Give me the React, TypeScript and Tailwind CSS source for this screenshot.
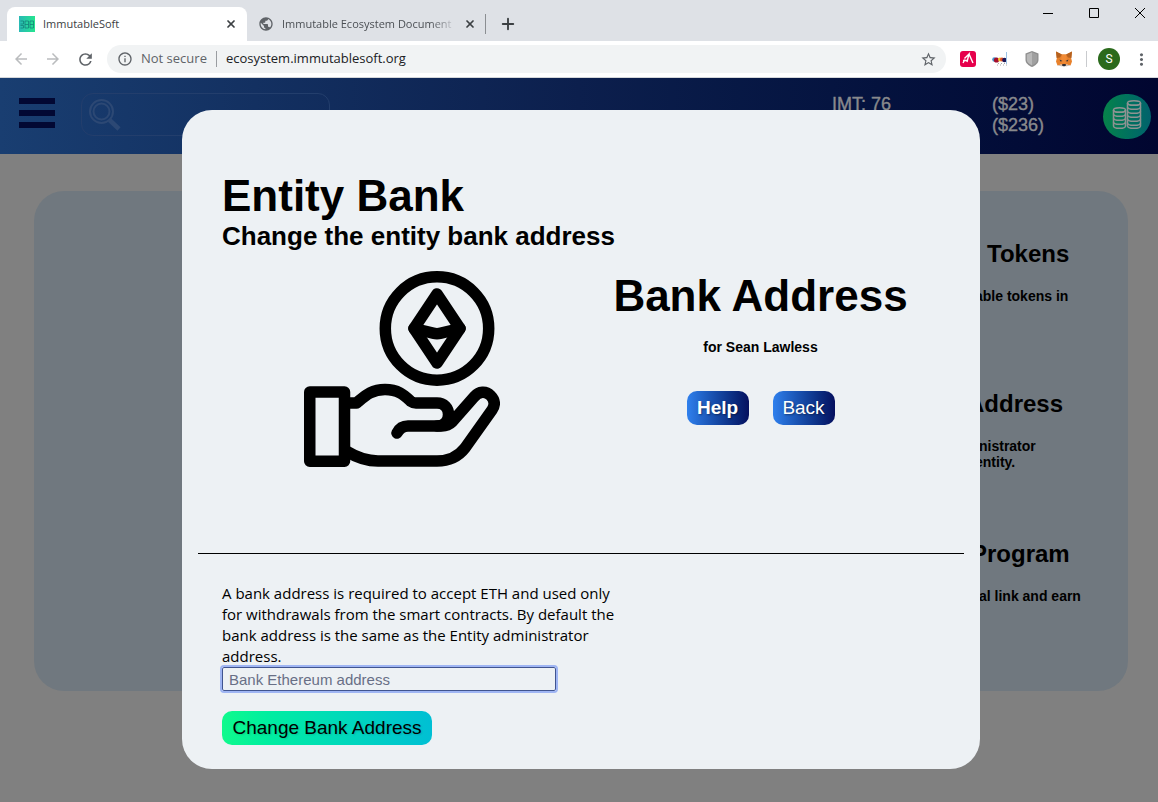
import type { ReactNode } from "react";
import { Plus, X } from "lucide-react";
import { MdArrowBack, MdArrowForward, MdInfoOutline, MdMoreVert, MdPublic, MdRefresh, MdStarBorder } from "react-icons/md";

const ui = "font-['Open_Sans','Noto_Sans',sans-serif]";
const arial = "font-['Liberation_Sans',Arial,sans-serif]";

function TabStrip() {
  return (
    <div className="flex h-[41px] items-end bg-[#dee1e6] pl-[7px]">
      <div className="flex h-[34px] w-60 shrink-0 items-center rounded-t-lg bg-white pr-2.5 pl-3">
        <svg viewBox="0 0 16 16" className="size-4 shrink-0" aria-hidden="true">
          <defs>
            <linearGradient id="fav" x1="0" x2="1">
              <stop offset="0" stopColor="#29b9b5" />
              <stop offset="1" stopColor="#25e58f" />
            </linearGradient>
          </defs>
          <rect width="16" height="16" fill="url(#fav)" />
          <path d="M1.5 5h3v3h-3M1.5 9.500h3v2.500h-3M6 5h3.500v7H6V5zm0 3.500h3.500M11 5h3.500v7H11V5zm0 3.500h3.500" fill="none" stroke="#137f78" strokeWidth="1" opacity=".75" />
        </svg>
        <span className="ml-2 flex-1 text-[11px] text-[#3c4043]">ImmutableSoft</span>
        <button type="button" aria-label="Close tab">
          <X size={12} strokeWidth={3.500} className="text-[#3c4043]" />
        </button>
      </div>
      <div className="flex h-[34px] w-[239px] shrink-0 items-center pl-[11px]">
        <MdPublic size={16} className="shrink-0 text-[#5f6368]" />
        <span className="ml-2 w-[175px] text-[11px] whitespace-nowrap text-[#4b4f54] [mask-image:linear-gradient(to_right,black_85%,transparent)]">
          Immutable Ecosystem Document
        </span>
        <button type="button" aria-label="Close tab" className="ml-[7px]">
          <X size={12} strokeWidth={3.500} className="text-[#3c4043]" />
        </button>
        <span className="ml-[9px] h-5 w-px shrink-0 bg-[#8b8e92]" />
      </div>
      <button type="button" aria-label="New tab" className="ml-[13px] flex h-[34px] items-center">
        <Plus size={18} strokeWidth={2.500} className="text-[#3c4043]" />
      </button>
      <div className="ml-auto flex h-full items-start gap-9 pt-2 pr-[13px] text-black">
        <button type="button" aria-label="Minimize">
          <svg viewBox="0 0 10 10" className="size-2.5"><path d="M0 5.500h10" stroke="currentColor" /></svg>
        </button>
        <button type="button" aria-label="Maximize">
          <svg viewBox="0 0 10 10" className="size-2.5"><path d="M.5.5h9v9h-9z" fill="none" stroke="currentColor" /></svg>
        </button>
        <button type="button" aria-label="Close">
          <svg viewBox="0 0 10 10" className="size-2.5"><path d="M0 0l10 10M10 0L0 10" stroke="currentColor" /></svg>
        </button>
      </div>
    </div>
  );
}

function Extensions() {
  return (
    <div className="ml-3.5 flex items-center gap-4">
      <svg viewBox="0 0 16 16" className="size-4">
        <rect width="16" height="16" rx="3" fill="#e6004c" />
        <path d="M3 12l2-3.500M3 9.500h4.500M4.500 7.500L9 3l-2 8M9 3l4 9" fill="none" stroke="#fff" strokeWidth="1.400" />
      </svg>
      <svg viewBox="0 0 16 16" className="size-4">
        <circle cx="2.500" cy="8.500" r="2.300" fill="#4a91c9" />
        <circle cx="4.500" cy="9" r="2.600" fill="#a30f2e" />
        <circle cx="8" cy="8.500" r="2" fill="#f4c531" />
        <circle cx="10" cy="8.500" r="2" fill="#e24f2c" />
        <circle cx="12.500" cy="9" r="2.300" fill="#1c1755" />
        <path d="M14.500 1v12" stroke="#9cc3e6" />
        <path d="M5 14h10M6 12.500h8" stroke="#aaa" strokeDasharray="1 2" />
      </svg>
      <svg viewBox="0 0 16 16" className="size-4">
        <path d="M8 0l6.500 2.500V9c0 3-3 5.500-6.500 7-3.500-1.500-6.500-4-6.500-7V2.500z" fill="#8f8f8f" />
        <path d="M8 1.300v13.200c-3-1.400-5.200-3.300-5.200-5.700V3.400z" fill="#b9b9b9" />
        <path d="M8 1.300v13.200c3-1.400 5.200-3.300 5.200-5.700V3.400z" fill="#a0a0a0" />
      </svg>
      <svg viewBox="0 0 16 16" className="size-4">
        <path d="M0 .5l6 3h4l6-3-1 6 1 4-1.500 4-4-1-1.500 1.500H7L5.500 13.500l-4 1L0 10.500l1-4z" fill="#e8812b" />
        <path d="M0 .5l6 3-2 3-3.500.5zM16 .5l-6 3 2 3 3.500.5z" fill="#b5611f" />
        <path d="M6 3.500h4l1 6-1 3H6l-1-3z" fill="#f08a35" />
        <path d="M3.500 8.500l3 1.500-2 .5zM12.500 8.500l-3 1.500 2 .5zM6.500 13h3l.5 1.500-1 .8H7l-1-.8z" fill="#2b2f3a" />
        <path d="M1.500 14.500l4-1 1 2zM14.500 14.500l-4-1-1 2z" fill="#cdbfb4" />
      </svg>
    </div>
  );
}

function Toolbar() {
  return (
    <div className="flex h-[37px] items-center border-b border-[#d5d7da] bg-white pr-[7px] pl-3 text-[#5f6368]">
      <button type="button" aria-label="Back" className="text-[#babcbe]"><MdArrowBack size={18} /></button>
      <button type="button" aria-label="Forward" className="ml-3.5 text-[#babcbe]"><MdArrowForward size={18} /></button>
      <button type="button" aria-label="Reload" className="ml-3.5"><MdRefresh size={19} /></button>
      <div className="ml-3 flex h-7 flex-1 items-center rounded-full bg-[#f1f3f4] pr-[9px] pl-2.5">
        <MdInfoOutline size={16} />
        <span className="ml-2 text-[13px]">Not secure</span>
        <span className="mr-[9px] ml-[9px] h-4 w-px bg-[#9a9da1]" />
        <input
          aria-label="Address"
          defaultValue="ecosystem.immutablesoft.org"
          className="min-w-0 flex-1 bg-transparent text-[13px] text-[#202124] outline-none"
        />
        <MdStarBorder size={17} />
      </div>
      <Extensions />
      <span className="ml-3.5 h-4 w-px bg-[#c9cbce]" />
      <button type="button" className="ml-[11px] flex size-[22px] items-center justify-center rounded-full bg-[#2b6a1c] font-['Roboto',sans-serif] text-xs text-white">
        S
      </button>
      <button type="button" aria-label="Menu" className="ml-3"><MdMoreVert size={19} /></button>
    </div>
  );
}

function Coins() {
  const left = [16, 20, 24, 28, 32];
  const right = [9, 13, 17, 21, 25, 29, 32];
  return (
    <svg viewBox="0 0 48 45" className="h-[45px] w-12" fill="none" stroke="#8e9392" strokeWidth="1.500">
      <ellipse cx="16.500" cy="16" rx="6" ry="2.300" />
      <path d="M10.500 16v16M22.500 16v16" />
      {left.map((y) => <path key={y} d={`M10.500 ${y}c0 3.100 12 3.100 12 0`} />)}
      <ellipse cx="31" cy="9" rx="6.500" ry="2.300" />
      <path d="M24.500 9V32M37.500 9V32" />
      {right.map((y) => <path key={y} d={`M24.500 ${y}c0 3.100 13 3.100 13 0`} />)}
    </svg>
  );
}

function SiteHeader() {
  return (
    <header className="flex h-[76px] bg-linear-to-r from-[#193e71] via-[#0c1f4d] to-[#010630] pr-[7px] pl-[19px]">
      <button type="button" aria-label="Open menu" className="mt-5 flex h-[30px] w-9 flex-col justify-between">
        <span className="h-1.5 w-full bg-[#020833]" />
        <span className="h-1.5 w-full bg-[#020833]" />
        <span className="h-1.5 w-full bg-[#020833]" />
      </button>
      <div className="mt-[15px] ml-[26px] flex h-[43px] w-[249px] items-center rounded-xl border border-[#233e6c] px-1.5">
        <svg viewBox="0 0 34 34" className="size-[34px] shrink-0" fill="none" stroke="#2c4874">
          <circle cx="13.500" cy="13.500" r="11.500" strokeWidth="2" />
          <circle cx="13.500" cy="13.500" r="8" strokeWidth="2" />
          <path d="M21.500 22l9.500 9" strokeWidth="4.500" />
        </svg>
        <input aria-label="Search" className="min-w-0 flex-1 bg-transparent outline-none" />
      </div>
      <div className="ml-auto flex pt-4 text-lg leading-[21px] text-[#88898c] [-webkit-text-stroke:0.4px_#88898c]">
        <p className="w-40">IMT: 76</p>
        <p className="w-[111px]">($23)<br />($236)</p>
      </div>
      <button type="button" aria-label="Tokens" className="mt-4 h-[45px] w-12 shrink-0 rounded-full bg-linear-to-r from-[#078249] to-[#02626c]">
        <Coins />
      </button>
    </header>
  );
}

function Summary({ title, inset, children }: { title: string; inset: string; children: ReactNode }) {
  return (
    <section className="h-[150px]">
      <h2 className={`text-2xl leading-8 font-bold ${inset}`}>{title}</h2>
      <div className="mt-[18px] text-sm leading-4 font-bold">{children}</div>
    </section>
  );
}

function Backdrop() {
  return (
    <div className="mt-[37px] mr-[30px] ml-[34px] flex h-[500px] justify-end rounded-[30px] bg-[#70787f]">
      <div className="w-[161px] pt-[47px] whitespace-nowrap text-black">
        <Summary title="Tokens" inset="pl-5"><p className="pl-2">able tokens in</p></Summary>
        <Summary title="Address" inset="pl-0"><p className="pl-3">nistrator</p><p className="pl-2">entity.</p></Summary>
        <Summary title="Program" inset="pl-1"><p className="pl-3">al link and earn</p></Summary>
      </div>
    </div>
  );
}

function HandWithCoin() {
  return (
    <svg viewBox="0 0 196 196" className="size-[196px]" fill="none" stroke="black" strokeWidth="11.500" strokeLinecap="round" strokeLinejoin="round" aria-hidden="true">
      <circle cx="133" cy="57.500" r="51.700" />
      <path d="M133 23l23 34.500-23 34.500-23-34.500z" />
      <path d="M110 57.500l19 4.700q4 1 8 0l19-4.700" />
      <path d="M5.750 121h34.750v69.250H5.750z" />
      <path d="M42 132h10.500C61 125 67 118.500 81 118.500S101 125 107 130.500Q109 132 112 132h21c7 0 11.500 5 11.500 11.500S140 155 133 155h-29c-5 0-9 3-11 7" />
      <path d="M133 155h5q6 0 10-4l22-25c5-6 12-6 16.500-1.500s5 9.500 1.500 14.500l-27 38c-7 9-17 13-28 13H74c-11 0-22-4-31-9.500" />
    </svg>
  );
}

function BankDialog() {
  const pill = "h-[34px] rounded-[10px] text-[19px]";
  const blue = "w-[62px] bg-linear-to-r from-[#2f80ed] to-[#06105f] text-white [text-shadow:1px_1px_2px_#0006]";
  return (
    <div role="dialog" aria-labelledby="dialog-title" className="w-full max-w-[798px] rounded-[30px] bg-[#edf1f4] px-4 pt-16 pb-6 text-black">
      <div className="px-6">
        <h1 id="dialog-title" className="text-[44px] leading-[44px] font-bold">Entity Bank</h1>
        <h2 className="mt-0.5 text-[26px] leading-8 font-bold">Change the entity bank address</h2>
      </div>
      <div className="mt-[19px] grid min-h-[282px] grid-cols-2 px-6">
        <div className="flex justify-center"><HandWithCoin /></div>
        <div className="text-center">
          <h2 className="mt-[3px] text-[44px] leading-[44px] font-bold whitespace-nowrap">Bank Address</h2>
          <p className="mt-[19px] text-sm leading-5 font-bold">for Sean Lawless</p>
          <div className="mt-[34px] flex justify-center gap-6">
            <button type="button" className={`${pill} ${blue} font-bold`}>Help</button>
            <button type="button" className={`${pill} ${blue}`}>Back</button>
          </div>
        </div>
      </div>
      <hr className="border-black" />
      <form className="px-6 pt-[29px]" onSubmit={(e) => e.preventDefault()}>
        <label htmlFor="bank" className={`block w-[410px] text-[15px] leading-[21px] ${ui}`}>
          A bank address is required to accept ETH and used only for withdrawals from the smart contracts. By default the bank address is the same as the Entity administrator address.
        </label>
        <input
          id="bank"
          placeholder="Bank Ethereum address"
          className="block h-6 w-[334px] rounded-xs border border-[#40548f] bg-transparent px-1.5 text-[15px] outline-2 outline-[#9fb5f3] placeholder:text-[#686f86]"
        />
        <button type="submit" className={`${pill} mt-5 w-[210px] bg-linear-to-r from-[#10fa8c] to-[#00bfd4] [text-shadow:1px_1px_2px_#0002]`}>
          Change Bank Address
        </button>
      </form>
    </div>
  );
}

export default function App() {
  return (
    <div className={`flex min-h-screen flex-col ${arial}`}>
      <div className={ui}>
        <TabStrip />
        <Toolbar />
      </div>
      <main className="relative flex-1 bg-[#808080]">
        <SiteHeader />
        <Backdrop />
        <div className="absolute inset-0 flex items-start justify-center pt-8 pl-1">
          <BankDialog />
        </div>
      </main>
    </div>
  );
}
